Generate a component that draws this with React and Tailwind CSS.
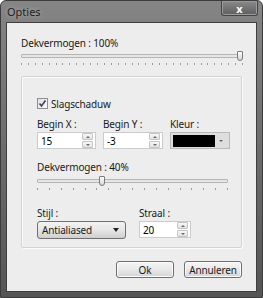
import { useState } from "react";

const font = { fontFamily: '"Noto Sans", "Open Sans", sans-serif' };

const Slider = ({ value, width, ticks }) => {
  return (
    <div className="relative" style={{ width }}>
      <div className="relative h-[11px]">
        <div className="absolute left-0 right-0 top-[3px] h-[4px] border border-[#b5b5b5] bg-[#e6e6e6] rounded-[1px]" />
        <div
          className="absolute top-0 h-[10px] w-[6px] border border-[#7a7a7a] bg-gradient-to-b from-[#fdfdfd] to-[#d6d6d6] rounded-b-[3px] rounded-t-[1px]"
          style={{ left: `calc(${value}% - ${value === 100 ? 6 : 3}px)` }}
        />
      </div>
      <div className="flex justify-between mt-[1px] h-[3px]">
        {Array.from({ length: ticks }).map((_, i) => (
          <div key={i} className="w-px h-[2px] bg-[#9a9a9a]" />
        ))}
      </div>
    </div>
  );
};

const Spin = () => (
  <div className="flex flex-col gap-px w-[11px] mr-[2px]">
    <div className="h-[7px] border border-[#c5c5c5] bg-gradient-to-b from-[#f7f7f7] to-[#e2e2e2] flex items-center justify-center rounded-[1px]">
      <div className="w-0 h-0 border-l-[2px] border-r-[2px] border-b-[2px] border-l-transparent border-r-transparent border-b-[#6b6b6b]" />
    </div>
    <div className="h-[7px] border border-[#c5c5c5] bg-gradient-to-b from-[#f7f7f7] to-[#e2e2e2] flex items-center justify-center rounded-[1px]">
      <div className="w-0 h-0 border-l-[2px] border-r-[2px] border-t-[2px] border-l-transparent border-r-transparent border-t-[#6b6b6b]" />
    </div>
  </div>
);

const SpinField = ({ value, width }) => (
  <div
    className="h-[17px] border border-[#c9cbcf] bg-white flex items-center justify-between"
    style={{ width }}
  >
    <span className="pl-[3px] text-[10px] leading-none text-black">{value}</span>
    <Spin />
  </div>
);

const Button = ({ children }) => (
  <button className="w-[58px] h-[17px] border border-[#707070] rounded-[3px] bg-gradient-to-b from-[#f5f5f5] via-[#e9e9e9] to-[#d4d4d4] text-[10px] leading-none text-[#1a1a1a] shadow-[inset_0_0_0_1px_#fbfbfb]">
    {children}
  </button>
);

export default function App() {
  const [shadow, setShadow] = useState(true);

  return (
    <div
      className="w-[263px] h-[298px] flex flex-col bg-gradient-to-b from-[#858585] via-[#6c6c6c] to-[#555] rounded-t-[6px] border border-[#3c3c3c]"
      style={font}
    >
      <div className="h-[21px] flex justify-between items-start">
        <span className="pl-[6px] pt-[4px] text-[11px] leading-[14px] text-[#1e1e1e] [text-shadow:0_0_4px_#bdbdbd]">
          Opties
        </span>
        <div className="mr-[4px] w-[37px] h-[15px] border border-[#444] border-t-0 rounded-b-[3px] bg-gradient-to-b from-[#8a8a8a] to-[#5e5e5e] flex items-center justify-center shadow-[inset_0_0_0_1px_#9a9a9a]">
          <span className="text-white text-[11px] font-bold leading-none">x</span>
        </div>
      </div>

      <div className="flex-1 mx-[5px] mb-[5px] border border-[#3f3f3f] bg-[#ededed] pl-[14px] pr-[14px] pt-[14px] text-[10px] tracking-[-0.15px] text-[#1a1a1a]">
        <div className="leading-[13px]">Dekvermogen : 100%</div>
        <div className="mt-[1px]">
          <Slider value={100} width={222} ticks={33} />
        </div>

        <div className="mt-[10px] h-[172px] border border-[#d3d3d3] rounded-[2px] shadow-[inset_1px_1px_0_#fafafa,1px_1px_0_#fafafa] pl-[15px] pt-[21px]">
          <label className="flex items-center gap-[3px] leading-none">
            <span
              onClick={() => setShadow(!shadow)}
              className="w-[11px] h-[11px] border border-[#8e8f8f] bg-gradient-to-br from-[#e0e0e0] to-[#fbfbfb] flex items-center justify-center"
            >
              {shadow && (
                <svg width="9" height="9" viewBox="0 0 9 9">
                  <path d="M1.5 4.5 L3.5 7 L7.5 1.5" stroke="#3b3b6b" strokeWidth="1.6" fill="none" />
                </svg>
              )}
            </span>
            <span>Slagschaduw</span>
          </label>

          <div className="flex mt-[9px] gap-[7px]">
            <div className="flex flex-col gap-[1px]">
              <span className="leading-[13px]">Begin X :</span>
              <SpinField value="15" width={59} />
            </div>
            <div className="flex flex-col gap-[1px]">
              <span className="leading-[13px]">Begin Y :</span>
              <SpinField value="-3" width={60} />
            </div>
            <div className="flex flex-col gap-[1px]">
              <span className="leading-[13px]">Kleur :</span>
              <div className="w-[60px] h-[17px] border border-[#b9b9b9] bg-[#dedede] flex items-center p-[2px]">
                <div className="w-[42px] h-[12px] bg-black" />
                <div className="flex-1 flex items-center justify-center">
                  <div className="w-0 h-0 border-l-[2px] border-r-[2px] border-t-[2px] border-l-transparent border-r-transparent border-t-[#666]" />
                </div>
              </div>
            </div>
          </div>

          <div className="mt-[12px] leading-[13px]">Dekvermogen : 40%</div>
          <div className="mt-[2px]">
            <Slider value={34} width={191} ticks={17} />
          </div>

          <div className="flex mt-[16px] gap-[13px]">
            <div className="flex flex-col gap-[1px]">
              <span className="leading-[13px]">Stijl :</span>
              <div className="w-[89px] h-[18px] border border-[#707070] rounded-[3px] bg-gradient-to-b from-[#f3f3f3] via-[#e6e6e6] to-[#cfcfcf] flex items-center justify-between px-[4px]">
                <span className="leading-none">Antialiased</span>
                <div className="w-0 h-0 border-l-[3px] border-r-[3px] border-t-[4px] border-l-transparent border-r-transparent border-t-[#222] mr-[2px]" />
              </div>
            </div>
            <div className="flex flex-col gap-[1px]">
              <span className="leading-[13px]">Straal :</span>
              <SpinField value="20" width={52} />
            </div>
          </div>
        </div>

        <div className="flex justify-end gap-[10px] mt-[13px]">
          <Button>Ok</Button>
          <Button>Annuleren</Button>
        </div>
      </div>
    </div>
  );
}
